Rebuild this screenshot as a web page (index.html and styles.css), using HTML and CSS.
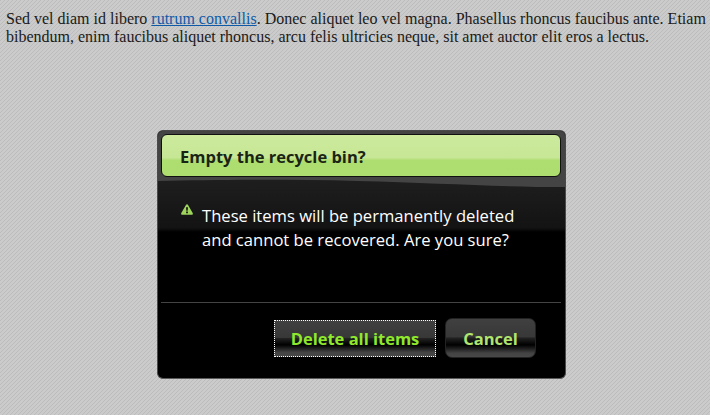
FILE: index.html
```html
<!DOCTYPE html>
<html lang="en">
<head>
<meta charset="utf-8">
<title>Empty the recycle bin?</title>
<link rel="stylesheet" href="styles.css">
</head>
<body>
<p class="copy">Sed vel diam id libero <a href="#">rutrum convallis</a>. Donec aliquet leo vel magna. Phasellus rhoncus faucibus ante. Etiam bibendum, enim faucibus aliquet rhoncus, arcu felis ultricies neque, sit amet auctor elit eros a lectus.</p>
<div class="dialog">
  <div class="dialog-top">
    <h1 class="title">Empty the recycle bin?</h1>
    <div class="message">
      <svg class="warn" viewBox="0 0 12 11" width="12" height="11"><path fill-rule="evenodd" fill="#9ed45c" d="M6 0.2c.4 0 .7.2.9.5l4.8 8.4c.4.7-.1 1.6-.9 1.6H1.2c-.8 0-1.3-.9-.9-1.6L5.1.7C5.3.4 5.6.2 6 .2ZM5 3.2l.3 3.6h1.4L7 3.2ZM5.1 7.6v1.6h1.8V7.6Z"/></svg>
      <p class="message-text">These items will be permanently deleted<br>and cannot be recovered. Are you sure?</p>
    </div>
  </div>
  <div class="actions">
    <button class="btn btn-primary">Delete all items</button>
    <button class="btn btn-cancel">Cancel</button>
  </div>
</div>
</body>
</html>
```
FILE: styles.css
```css
html, body { height: 100%; }
body {
  margin: 0;
  padding: 10px 6px 0;
  box-sizing: border-box;
  overflow: hidden;
  background-color: #c8c8c8;
  background-image: linear-gradient(135deg, #bcbcbc 12.5%, #cbcbcb 12.5%, #cbcbcb 50%, #bcbcbc 50%, #bcbcbc 62.5%, #cbcbcb 62.5%);
  background-size: 4px 4px;
  font-family: "Liberation Serif", serif;
  font-size: 16px;
  color: #1a1a1a;
}
.copy { margin: 0; line-height: 18px; width: 700px; }
.copy a { color: #0e5aa8; }
.dialog {
  position: relative;
  width: 409px;
  height: 249px;
  margin: 84px 0 0 151px;
  box-sizing: border-box;
  border-radius: 6px;
  border: 1px solid #4a4a4a;
  border-bottom-color: #5a5a5a;
  background: #000;
  font-family: "Open Sans", sans-serif;
  display: flex;
  flex-direction: column;
  overflow: hidden;
}
.dialog-top {
  position: relative;
  height: 171px;
  box-sizing: border-box;
  padding: 3px 4px 0 3px;
  background: linear-gradient(#222 0, #1e1e1e 50px, #131313 97px, #000 101px) 0 0/100% 100% no-repeat;
}
.dialog-top::before {
  content: "";
  position: absolute;
  inset: 0;
  background: #444;
  clip-path: path("M0 0H408V56C340 56 280 52 200 50C120 48 50 49 0 50Z");
}
.title {
  position: relative;
  margin: 0;
  height: 43px;
  box-sizing: border-box;
  padding-left: 18px;
  border: 1px solid #111;
  border-radius: 6px;
  background: linear-gradient(#cdea9d 0, #c6e795 55%, #aedd70 62%, #aede6f 100%);
  font-size: 16.5px;
  font-weight: 700;
  line-height: 43px;
  color: #1a2414;
}
.message {
  position: relative;
  display: flex;
  align-items: flex-start;
  gap: 9px;
  padding: 27px 0 0 20px;
}
.warn { flex: none; }
.message-text {
  margin: 0;
  color: #fff;
  font-size: 16.6px;
  line-height: 24px;
}
.actions {
  margin: 0 4px 0 3px;
  border-top: 1px solid #444;
  position: relative;
  padding: 15px 25px 0 0;
  display: flex;
  justify-content: flex-end;
  align-items: flex-start;
  gap: 9px;
}
.btn {
  box-sizing: border-box;
  font-family: inherit;
  font-size: 16.5px;
  font-weight: 700;
  padding: 0;
  background: linear-gradient(#404040 0, #383838 47%, #222 50%, #000 68%, #444 90%, #484848 100%);
}
.btn-primary {
  width: 162px;
  height: 37px;
  margin-top: 2px;
  border: 1px dotted #fff;
  border-radius: 0;
  color: #8fe82c;
}
.btn-cancel {
  width: 91px;
  height: 40px;
  border: 1px solid #222;
  border-radius: 7px;
  color: #b0e56f;
}
```
